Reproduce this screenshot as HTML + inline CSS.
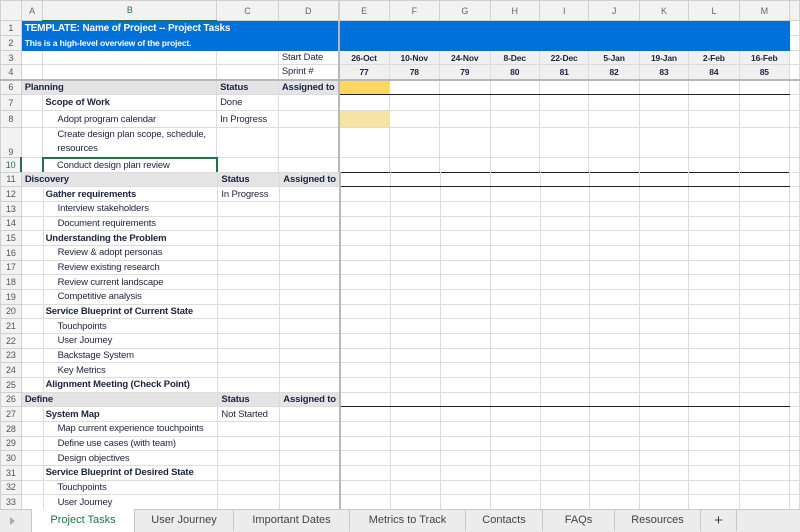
<!DOCTYPE html>
<html><head><meta charset="utf-8">
<style>
*{margin:0;padding:0;box-sizing:border-box}
body{width:800px;height:532px;overflow:hidden;background:#fff;font-family:"Liberation Sans",Arial,sans-serif;position:relative}
table{border-collapse:collapse;table-layout:fixed;position:absolute;left:0;top:0}
td{border:1px solid #dcdcdc;font-size:9.5px;color:#1c2340;white-space:nowrap;overflow:visible;padding:0 3px;letter-spacing:-0.15px}
tr.h td{background:#f2f2f2;color:#666;text-align:center;font-size:9px;border-color:#d0d0d0}
td.n{background:#f2f2f2;color:#555;text-align:center;padding:0;font-size:9px;border-color:#d0d0d0}
.blue{background:#0070da;color:#fff;font-weight:bold;border-color:#0070da}
.sec td.g{background:#e4e4e4;font-weight:bold}
.sec td.t{border-top:1.5px solid #222;border-bottom:1.5px solid #222}
.b{font-weight:bold}
.dh{background:#f0f0f0;font-weight:bold;text-align:center;font-size:8.5px}
.fz td{border-bottom:2px solid #b8b8b8}
.vl{border-left:2px solid #b8b8b8}
</style></head><body>
<table>
<colgroup><col style="width:21px"><col style="width:22px"><col style="width:175px"><col style="width:62px"><col style="width:60px"><col style="width:51px"><col style="width:51px"><col style="width:51px"><col style="width:50px"><col style="width:50px"><col style="width:51px"><col style="width:50px"><col style="width:51px"><col style="width:51px"><col style="width:10px"></colgroup>
<tr class="h" style="height:20px"><td></td><td>A</td><td style="color:#217346;border-bottom:2px solid #217346">B</td><td>C</td><td>D</td><td class="vl">E</td><td>F</td><td>G</td><td>H</td><td>I</td><td>J</td><td>K</td><td>L</td><td>M</td><td></td></tr>
<tr style="height:15px"><td class="n">1</td><td class="blue" colspan="4" style="font-size:10px">TEMPLATE: Name of Project -- Project Tasks</td><td class="blue vl" colspan="9"></td><td></td></tr>
<tr style="height:15px"><td class="n">2</td><td class="blue" colspan="4" style="font-size:8.5px">This is a high-level overview of the project.</td><td class="blue vl" colspan="9"></td><td></td></tr>
<tr style="height:14px"><td class="n">3</td><td></td><td></td><td></td><td>Start Date</td><td class="dh vl">26-Oct</td><td class="dh">10-Nov</td><td class="dh">24-Nov</td><td class="dh">8-Dec</td><td class="dh">22-Dec</td><td class="dh">5-Jan</td><td class="dh">19-Jan</td><td class="dh">2-Feb</td><td class="dh">16-Feb</td><td></td></tr>
<tr style="height:15px" class="fz"><td class="n">4</td><td></td><td></td><td></td><td>Sprint #</td><td class="dh vl">77</td><td class="dh">78</td><td class="dh">79</td><td class="dh">80</td><td class="dh">81</td><td class="dh">82</td><td class="dh">83</td><td class="dh">84</td><td class="dh">85</td><td></td></tr>
<tr style="height:15px" class="sec"><td class="n">6</td><td class="g" colspan="2">Planning</td><td class="g">Status</td><td class="g">Assigned to</td><td class="vl" style="background:#ffd75e;border-bottom:1.5px solid #222"></td><td style="border-bottom:1.5px solid #222"></td><td style="border-bottom:1.5px solid #222"></td><td style="border-bottom:1.5px solid #222"></td><td style="border-bottom:1.5px solid #222"></td><td style="border-bottom:1.5px solid #222"></td><td style="border-bottom:1.5px solid #222"></td><td style="border-bottom:1.5px solid #222"></td><td style="border-bottom:1.5px solid #222"></td><td></td></tr>
<tr style="height:16px"><td class="n">7</td><td></td><td class="b" style="padding-left:2px">Scope of Work</td><td>Done</td><td></td><td class="vl"></td><td></td><td></td><td></td><td></td><td></td><td></td><td></td><td></td><td></td></tr>
<tr style="height:17px"><td class="n">8</td><td></td><td style="padding-left:14px">Adopt program calendar</td><td>In Progress</td><td></td><td class="vl" style="background:#f8e4a2"></td><td></td><td></td><td></td><td></td><td></td><td></td><td></td><td></td><td></td></tr>
<tr style="height:30px"><td class="n" style="vertical-align:bottom">9</td><td></td><td style="padding-left:14px;line-height:14px;white-space:normal">Create design plan scope, schedule, resources</td><td></td><td></td><td class="vl"></td><td></td><td></td><td></td><td></td><td></td><td></td><td></td><td></td><td></td></tr>
<tr style="height:15px"><td class="n" style="color:#217346;border-right:2px solid #217346">10</td><td></td><td style="padding-left:13px;border:2px solid #217346">Conduct design plan review</td><td></td><td></td><td class="vl"></td><td></td><td></td><td></td><td></td><td></td><td></td><td></td><td></td><td></td></tr>
</table>
<table style="top:171.5px">
<colgroup><col style="width:21px"><col style="width:22px"><col style="width:175px"><col style="width:62px"><col style="width:60px"><col style="width:51px"><col style="width:51px"><col style="width:51px"><col style="width:50px"><col style="width:50px"><col style="width:51px"><col style="width:50px"><col style="width:51px"><col style="width:51px"><col style="width:10px"></colgroup>
<tbody>
<tr class="sec" style="height:14.68px"><td class="n">11</td><td class="g" colspan="2">Discovery</td><td class="g">Status</td><td class="g">Assigned to</td><td class="t vl"></td><td class="t"></td><td class="t"></td><td class="t"></td><td class="t"></td><td class="t"></td><td class="t"></td><td class="t"></td><td class="t"></td><td></td></tr>
<tr style="height:14.68px"><td class="n">12</td><td></td><td class="b" style="padding-left:2px">Gather requirements</td><td>In Progress</td><td></td><td class="vl"></td><td></td><td></td><td></td><td></td><td></td><td></td><td></td><td></td><td></td></tr>
<tr style="height:14.68px"><td class="n">13</td><td></td><td style="padding-left:14px">Interview stakeholders</td><td></td><td></td><td class="vl"></td><td></td><td></td><td></td><td></td><td></td><td></td><td></td><td></td><td></td></tr>
<tr style="height:14.68px"><td class="n">14</td><td></td><td style="padding-left:14px">Document requirements</td><td></td><td></td><td class="vl"></td><td></td><td></td><td></td><td></td><td></td><td></td><td></td><td></td><td></td></tr>
<tr style="height:14.68px"><td class="n">15</td><td></td><td class="b" style="padding-left:2px">Understanding the Problem</td><td></td><td></td><td class="vl"></td><td></td><td></td><td></td><td></td><td></td><td></td><td></td><td></td><td></td></tr>
<tr style="height:14.68px"><td class="n">16</td><td></td><td style="padding-left:14px">Review &amp; adopt personas</td><td></td><td></td><td class="vl"></td><td></td><td></td><td></td><td></td><td></td><td></td><td></td><td></td><td></td></tr>
<tr style="height:14.68px"><td class="n">17</td><td></td><td style="padding-left:14px">Review existing research</td><td></td><td></td><td class="vl"></td><td></td><td></td><td></td><td></td><td></td><td></td><td></td><td></td><td></td></tr>
<tr style="height:14.68px"><td class="n">18</td><td></td><td style="padding-left:14px">Review current landscape</td><td></td><td></td><td class="vl"></td><td></td><td></td><td></td><td></td><td></td><td></td><td></td><td></td><td></td></tr>
<tr style="height:14.68px"><td class="n">19</td><td></td><td style="padding-left:14px">Competitive analysis</td><td></td><td></td><td class="vl"></td><td></td><td></td><td></td><td></td><td></td><td></td><td></td><td></td><td></td></tr>
<tr style="height:14.68px"><td class="n">20</td><td></td><td class="b" style="padding-left:2px">Service Blueprint of Current State</td><td></td><td></td><td class="vl"></td><td></td><td></td><td></td><td></td><td></td><td></td><td></td><td></td><td></td></tr>
<tr style="height:14.68px"><td class="n">21</td><td></td><td style="padding-left:14px">Touchpoints</td><td></td><td></td><td class="vl"></td><td></td><td></td><td></td><td></td><td></td><td></td><td></td><td></td><td></td></tr>
<tr style="height:14.68px"><td class="n">22</td><td></td><td style="padding-left:14px">User Journey</td><td></td><td></td><td class="vl"></td><td></td><td></td><td></td><td></td><td></td><td></td><td></td><td></td><td></td></tr>
<tr style="height:14.68px"><td class="n">23</td><td></td><td style="padding-left:14px">Backstage System</td><td></td><td></td><td class="vl"></td><td></td><td></td><td></td><td></td><td></td><td></td><td></td><td></td><td></td></tr>
<tr style="height:14.68px"><td class="n">24</td><td></td><td style="padding-left:14px">Key Metrics</td><td></td><td></td><td class="vl"></td><td></td><td></td><td></td><td></td><td></td><td></td><td></td><td></td><td></td></tr>
<tr style="height:14.68px"><td class="n">25</td><td></td><td class="b" style="padding-left:2px">Alignment Meeting (Check Point)</td><td></td><td></td><td class="vl"></td><td></td><td></td><td></td><td></td><td></td><td></td><td></td><td></td><td></td></tr>
<tr class="sec" style="height:14.68px"><td class="n">26</td><td class="g" colspan="2">Define</td><td class="g">Status</td><td class="g">Assigned to</td><td class="t vl"></td><td class="t"></td><td class="t"></td><td class="t"></td><td class="t"></td><td class="t"></td><td class="t"></td><td class="t"></td><td class="t"></td><td></td></tr>
<tr style="height:14.68px"><td class="n">27</td><td></td><td class="b" style="padding-left:2px">System Map</td><td>Not Started</td><td></td><td class="vl"></td><td></td><td></td><td></td><td></td><td></td><td></td><td></td><td></td><td></td></tr>
<tr style="height:14.68px"><td class="n">28</td><td></td><td style="padding-left:14px">Map current experience touchpoints</td><td></td><td></td><td class="vl"></td><td></td><td></td><td></td><td></td><td></td><td></td><td></td><td></td><td></td></tr>
<tr style="height:14.68px"><td class="n">29</td><td></td><td style="padding-left:14px">Define use cases (with team)</td><td></td><td></td><td class="vl"></td><td></td><td></td><td></td><td></td><td></td><td></td><td></td><td></td><td></td></tr>
<tr style="height:14.68px"><td class="n">30</td><td></td><td style="padding-left:14px">Design objectives</td><td></td><td></td><td class="vl"></td><td></td><td></td><td></td><td></td><td></td><td></td><td></td><td></td><td></td></tr>
<tr style="height:14.68px"><td class="n">31</td><td></td><td class="b" style="padding-left:2px">Service Blueprint of Desired State</td><td></td><td></td><td class="vl"></td><td></td><td></td><td></td><td></td><td></td><td></td><td></td><td></td><td></td></tr>
<tr style="height:14.68px"><td class="n">32</td><td></td><td style="padding-left:14px">Touchpoints</td><td></td><td></td><td class="vl"></td><td></td><td></td><td></td><td></td><td></td><td></td><td></td><td></td><td></td></tr>
<tr style="height:14.68px"><td class="n">33</td><td></td><td style="padding-left:14px">User Journey</td><td></td><td></td><td class="vl"></td><td></td><td></td><td></td><td></td><td></td><td></td><td></td><td></td><td></td></tr>
</tbody></table>
<div style="position:absolute;left:0;top:509px;width:800px;height:23px;background:#ececec;border-top:1px solid #c8c8c8;font-size:11px;color:#444">
<div style="position:absolute;left:10px;top:7px;width:0;height:0;border-left:5px solid #aaa;border-top:4px solid transparent;border-bottom:4px solid transparent"></div>
<div style="position:absolute;left:31px;top:-1px;width:104px;height:23px;background:#fff;color:#217346;text-align:center;line-height:22px;border-left:1px solid #c8c8c8;border-right:1px solid #c8c8c8">Project Tasks</div>
<div style="position:absolute;left:135px;width:99px;text-align:center;line-height:21px;border-right:1px solid #c8c8c8">User Journey</div>
<div style="position:absolute;left:234px;width:116px;text-align:center;line-height:21px;border-right:1px solid #c8c8c8">Important Dates</div>
<div style="position:absolute;left:350px;width:116px;text-align:center;line-height:21px;border-right:1px solid #c8c8c8">Metrics to Track</div>
<div style="position:absolute;left:466px;width:77px;text-align:center;line-height:21px;border-right:1px solid #c8c8c8">Contacts</div>
<div style="position:absolute;left:543px;width:72px;text-align:center;line-height:21px;border-right:1px solid #c8c8c8">FAQs</div>
<div style="position:absolute;left:615px;width:86px;text-align:center;line-height:21px;border-right:1px solid #c8c8c8">Resources</div>
<div style="position:absolute;left:701px;width:36px;text-align:center;line-height:21px;border-right:1px solid #c8c8c8;font-size:15px">+</div>
</div>
</body></html>
